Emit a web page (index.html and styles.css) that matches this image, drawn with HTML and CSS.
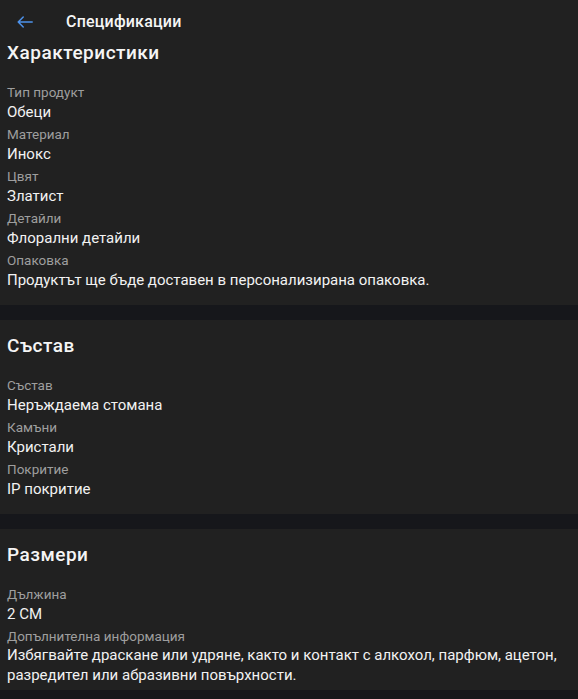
FILE: index.html
```html
<!DOCTYPE html>
<html lang="bg">
<head>
<meta charset="utf-8">
<link rel="stylesheet" href="styles.css">
</head>
<body>
<header class="topbar">
  <svg class="back" width="16" height="12" viewBox="0 0 16 12"><path d="M15.2 6H1.2M6.2 1L1.2 6l5 5" fill="none" stroke="#4d92ea" stroke-width="1.5" stroke-linecap="round" stroke-linejoin="round"/></svg>
  <span class="title">Спецификации</span>
</header>
<section class="section first">
  <h2 class="heading">Характеристики</h2>
  <div class="row"><div class="label">Тип продукт</div><div class="value">Обеци</div></div>
  <div class="row"><div class="label">Материал</div><div class="value">Инокс</div></div>
  <div class="row"><div class="label">Цвят</div><div class="value">Златист</div></div>
  <div class="row"><div class="label">Детайли</div><div class="value">Флорални детайли</div></div>
  <div class="row"><div class="label">Опаковка</div><div class="value">Продуктът ще бъде доставен в персонализирана опаковка.</div></div>
</section>
<section class="section">
  <h2 class="heading">Състав</h2>
  <div class="row"><div class="label">Състав</div><div class="value">Неръждаема стомана</div></div>
  <div class="row"><div class="label">Камъни</div><div class="value">Кристали</div></div>
  <div class="row"><div class="label">Покритие</div><div class="value">IP покритие</div></div>
</section>
<section class="section last">
  <h2 class="heading">Размери</h2>
  <div class="row"><div class="label">Дължина</div><div class="value">2 СМ</div></div>
  <div class="row"><div class="label">Допълнителна информация</div><div class="value multi">Избягвайте драскане или удряне, както и контакт с алкохол, парфюм, ацетон, разредител или абразивни повърхности.</div></div>
</section>
</body>
</html>
```
FILE: styles.css
```css
html, body {
  margin: 0;
  padding: 0;
  background: #16171b;
}
body {
  font-family: Roboto, "Noto Sans", sans-serif;
  color: #f2f2f2;
  width: 578px;
  height: 699px;
  overflow: hidden;
}
.topbar {
  height: 41px;
  background: #212121;
  display: flex;
  align-items: center;
  padding-left: 17px;
  padding-top: 2px;
  box-sizing: border-box;
}
.back {
  display: block;
}
.title {
  margin-left: 33px;
  font-size: 16px;
  font-weight: 500;
  letter-spacing: 0.2px;
  color: #f5f5f5;
}
.section {
  background: #212121;
  padding: 14px 7px 15px 7px;
  margin-bottom: 15px;
}
.section.first {
  padding-top: 0;
}
.section.last {
  padding-bottom: 5px;
  margin-bottom: 0;
}
.heading {
  margin: 0 0 17px 0;
  font-size: 19px;
  line-height: 24px;
  font-weight: 500;
  letter-spacing: 0.5px;
  color: #f5f5f5;
}
.row {
  margin-bottom: 2px;
}
.row:last-child {
  margin-bottom: 0;
}
.label {
  font-size: 13.5px;
  line-height: 20px;
  color: #9e9e9e;
}
.value {
  font-size: 15px;
  line-height: 20px;
  color: #f2f2f2;
}
.value.multi {
  line-height: 19.5px;
}
```
